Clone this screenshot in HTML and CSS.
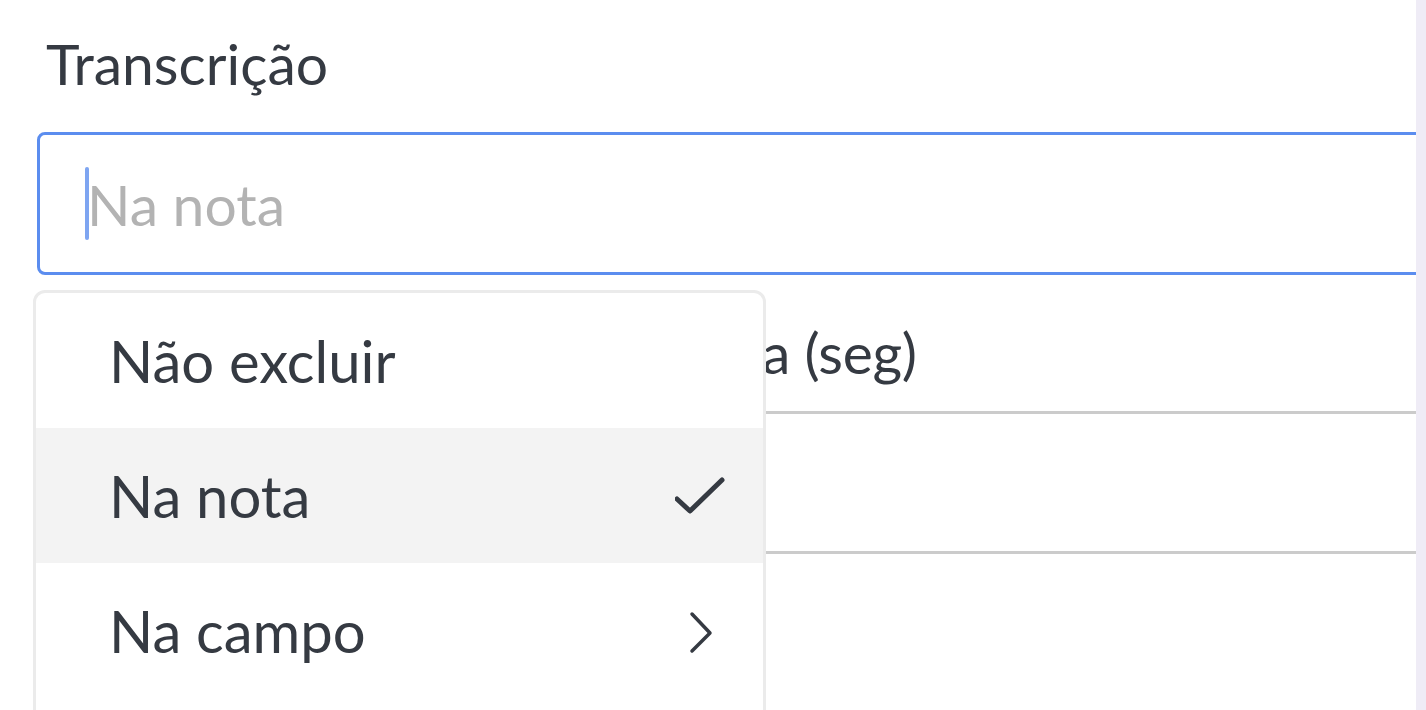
FILE: index.html
```html
<!DOCTYPE html>
<html lang="pt">
<head>
<meta charset="utf-8">
<title>Transcrição</title>
<link rel="stylesheet" href="styles.css">
</head>
<body>
<div class="screen">
  <main class="panel">
    <form class="form">
      <label class="label">Transcrição</label>
      <div class="field field-focus">
        <span class="caret"></span><span class="placeholder">Na nota</span>
      </div>
      <label class="label label-second">Duração máxima de cada nota (seg)</label>
      <div class="underline underline-first"></div>
      <div class="underline underline-second"></div>
    </form>
    <ul class="menu">
      <li class="menu-item"><span class="menu-text">Não excluir</span></li>
      <li class="menu-item is-selected"><span class="menu-text">Na nota</span>
        <svg class="icon" viewBox="0 0 50 50"><polyline points="2,28 15,40 47,9" fill="none" stroke="#353a42" stroke-width="5" stroke-linecap="round" stroke-linejoin="round"/></svg>
      </li>
      <li class="menu-item"><span class="menu-text">Na campo</span>
        <svg class="icon" viewBox="0 0 50 50"><polyline points="17,8 35,27 17,45" fill="none" stroke="#353a42" stroke-width="3.5" stroke-linecap="round" stroke-linejoin="round"/></svg>
      </li>
      <li class="menu-item"><span class="menu-text"></span></li>
    </ul>
  </main>
  <aside class="strip"></aside>
</div>
</body>
</html>
```
FILE: styles.css
```css
html, body {
  margin: 0;
  padding: 0;
  background: #ffffff;
}
body {
  font-family: "Lato", "Liberation Sans", sans-serif;
  color: #353a42;
  overflow: hidden;
}
.screen {
  display: flex;
  width: 1426px;
  height: 710px;
}
.panel {
  position: relative;
  flex: 1;
  overflow: hidden;
}
.strip {
  width: 10px;
  background: #efecf6;
}
.form {
  display: flex;
  flex-direction: column;
  padding: 28px 0 0 37px;
}
.label {
  display: block;
  font-size: 57px;
  line-height: 70px;
  height: 70px;
  padding-left: 9px;
  white-space: nowrap;
}
.field {
  margin-top: 34px;
  margin-right: -30px;
  height: 137px;
  border: 3px solid #5b8def;
  border-radius: 8px;
  display: flex;
  align-items: center;
  padding-left: 45px;
}
.caret {
  width: 4px;
  height: 73px;
  border-radius: 2px;
  background: #7ea5f1;
  flex: none;
}
.placeholder {
  font-size: 57px;
  color: #b3b3b3;
  margin-left: -2px;
}
.label-second {
  margin-top: 42px;
  letter-spacing: -0.3px;
}
.underline {
  border-bottom: 3px solid #cbcbcb;
  margin-right: -30px;
}
.underline-first {
  height: 24px;
}
.underline-second {
  height: 137px;
}
.menu {
  position: absolute;
  left: 33px;
  top: 290px;
  width: 727px;
  height: 520px;
  margin: 0;
  padding: 0;
  list-style: none;
  background: #ffffff;
  border: 3px solid #ebebeb;
  border-radius: 12px;
  overflow: hidden;
}
.menu-item {
  height: 135px;
  display: flex;
  align-items: center;
  justify-content: space-between;
  padding: 0 38px 0 73px;
  font-size: 58px;
}
.menu-item.is-selected {
  background: #f3f3f3;
}
.icon {
  width: 50px;
  height: 50px;
  flex: none;
}
```
